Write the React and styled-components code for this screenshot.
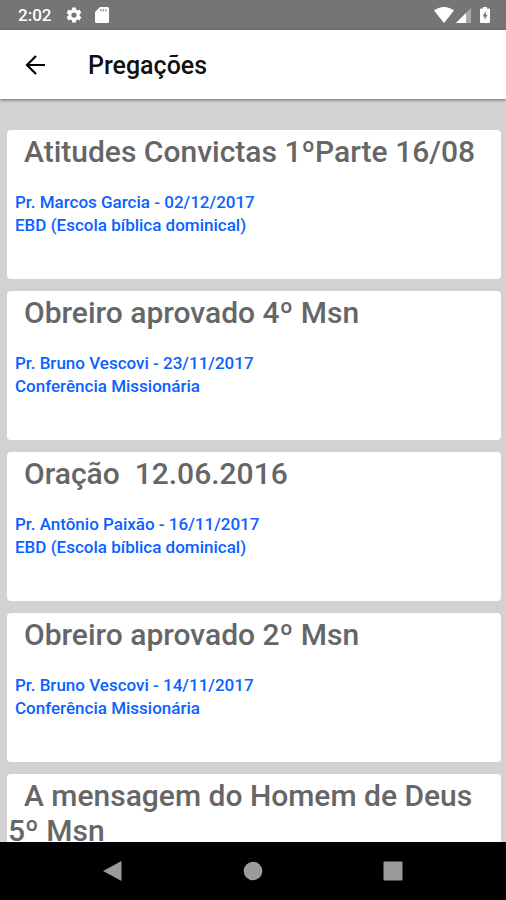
import React from "react";
import styled, { createGlobalStyle } from "styled-components";

const GlobalStyle = createGlobalStyle`
  body {
    margin:0;
    font-family:Roboto, "Liberation Sans", sans-serif;
  }
  * {
    box-sizing:border-box;
  }
`;

const Screen = styled.div`
  height:100vh;
  display:flex;
  flex-direction:column;
  background-color:#d3d1d4;
`;

const StatusBar = styled.div`
  flex:none;
  height:30px;
  padding:0 16px 0 18px;
  display:flex;
  align-items:center;
  justify-content:space-between;
  background-color:#757575;
  color:#ffffff;
`;

const StatusGroup = styled.div`
  display:flex;
  align-items:center;
  gap:${({ $gap }) => $gap}px;
`;

const Clock = styled.span`
  font-size:17px;
  font-weight:500;
  line-height:20px;
`;

const Header = styled.header`
  flex:none;
  height:69px;
  padding:0 24px;
  display:flex;
  align-items:center;
  gap:40px;
  background-color:#ffffff;
  box-shadow:0 1px 3px rgba(0, 0, 0, 0.5);
  z-index:1;
`;

const BackButton = styled.button`
  display:flex;
  padding:0;
  border:none;
  background:none;
  color:#000000;
  cursor:pointer;
`;

const HeaderTitle = styled.h1`
  margin:0;
  padding-top:2px;
  font-size:25px;
  font-weight:500;
  line-height:28px;
  color:#111111;
`;

const List = styled.main`
  flex:1;
  min-height:0;
  padding:31px 5px 0 7px;
  display:flex;
  flex-direction:column;
  gap:12px;
  overflow-y:auto;
  scrollbar-width:none;
`;

const Card = styled.article`
  flex:none;
  padding-bottom:42px;
  border-radius:4px;
  background-color:#ffffff;
`;

const CardTitle = styled.h2`
  margin:0 0 22px;
  padding:4px 1px 0;
  font-size:30px;
  font-weight:500;
  line-height:35px;
  text-indent:16px;
  white-space:pre-wrap;
  color:#666666;
`;

const CardText = styled.p`
  margin:0;
  padding:0 8px;
  font-size:17px;
  font-weight:500;
  line-height:23px;
  color:#0a62ff;
`;

const NavBar = styled.nav`
  flex:none;
  height:58px;
  display:flex;
  align-items:center;
  justify-content:center;
  gap:120px;
  background-color:#000000;
`;

const NavButton = styled.button`
  display:flex;
  padding:0;
  border:none;
  background:none;
  color:#9b9b9b;
  cursor:pointer;
`;

const sermons = [
  { title: "Atitudes Convictas 1ºParte 16/08", author: "Pr. Marcos Garcia", date: "02/12/2017", event: "EBD (Escola bíblica dominical)" },
  { title: "Obreiro aprovado 4º Msn", author: "Pr. Bruno Vescovi", date: "23/11/2017", event: "Conferência Missionária" },
  { title: "Oração  12.06.2016", author: "Pr. Antônio Paixão", date: "16/11/2017", event: "EBD (Escola bíblica dominical)" },
  { title: "Obreiro aprovado 2º Msn", author: "Pr. Bruno Vescovi", date: "14/11/2017", event: "Conferência Missionária" },
  { title: "A mensagem do Homem de Deus 5º Msn" },
];

const GearIcon = () => (
  <svg width="18" height="18" viewBox="0 0 24 24" fill="currentColor">
    <path d="M19.43 12.98c.04-.32.07-.64.07-.98s-.03-.66-.07-.98l2.11-1.65c.19-.15.24-.42.12-.64l-2-3.46c-.12-.22-.39-.3-.61-.22l-2.49 1c-.52-.4-1.08-.73-1.69-.98l-.38-2.65A.49.49 0 0 0 14 2h-4c-.25 0-.46.18-.49.42l-.38 2.65c-.61.25-1.17.59-1.69.98l-2.49-1c-.23-.09-.49 0-.61.22l-2 3.46c-.13.22-.07.49.12.64l2.11 1.65c-.04.32-.07.65-.07.98s.03.66.07.98l-2.11 1.65c-.19.15-.24.42-.12.64l2 3.46c.12.22.39.3.61.22l2.49-1c.52.4 1.08.73 1.69.98l.38 2.65c.03.24.24.42.49.42h4c.25 0 .46-.18.49-.42l.38-2.65c.61-.25 1.17-.59 1.69-.98l2.49 1c.23.09.49 0 .61-.22l2-3.46c.12-.22.07-.49-.12-.64zM12 15.5a3.5 3.5 0 1 1 0-7 3.5 3.5 0 0 1 0 7z" />
  </svg>
);

const SdCardIcon = () => (
  <svg width="14" height="16" viewBox="0 0 14 16">
    <path d="M5 0h7.500a1.500 1.500 0 0 1 1.500 1.500v13a1.500 1.500 0 0 1-1.500 1.500h-11A1.500 1.500 0 0 1 0 14.500V5z" fill="#ffffff" />
    <path d="M5 2h1.500v2.500H5zM7.500 2H9v2.500H7.500zM10 2h1.500v2.500H10z" fill="#a8a8a8" />
  </svg>
);

const WifiIcon = () => (
  <svg width="20" height="16" viewBox="0 0 20 16" fill="currentColor">
    <path d="M10 16L0 3.500C3 1.200 6.400 0 10 0s7 1.200 10 3.500z" />
  </svg>
);

const SignalIcon = () => (
  <svg width="15" height="15" viewBox="0 0 15 15">
    <path d="M15 0v15H0z" fill="#a9a9a9" />
    <path d="M10 5v10H0z" fill="#ffffff" />
  </svg>
);

const BatteryIcon = () => (
  <svg width="10" height="16" viewBox="0 0 10 16">
    <path d="M3 0h4v1.500h2a1 1 0 0 1 1 1V15a1 1 0 0 1-1 1H1a1 1 0 0 1-1-1V2.500a1 1 0 0 1 1-1h2z" fill="#ffffff" />
    <path d="M5.800 4L2.600 9.400h2V13l3-5.300H5.800z" fill="#757575" />
  </svg>
);

const ArrowIcon = () => (
  <svg width="24" height="24" viewBox="0 0 24 24" fill="none" stroke="currentColor" strokeWidth="2.200">
    <path d="M21 12H3.500M12 3L3 12l9 9" />
  </svg>
);

const App = () => {
  return(
    <>
      <GlobalStyle />
      <Screen>
        <StatusBar>
          <StatusGroup $gap={14}>
            <Clock>2:02</Clock>
            <StatusGroup $gap={12}>
              <GearIcon />
              <SdCardIcon />
            </StatusGroup>
          </StatusGroup>
          <StatusGroup $gap={2}>
            <WifiIcon />
            <StatusGroup $gap={9}>
              <SignalIcon />
              <BatteryIcon />
            </StatusGroup>
          </StatusGroup>
        </StatusBar>
        <Header>
          <BackButton type="button" aria-label="Voltar">
            <ArrowIcon />
          </BackButton>
          <HeaderTitle>Pregações</HeaderTitle>
        </Header>
        <List>
          {sermons.map((sermon) => (
            <Card key={sermon.title}>
              <CardTitle>{sermon.title}</CardTitle>
              {sermon.author && <CardText>{sermon.author} - {sermon.date}</CardText>}
              {sermon.event && <CardText>{sermon.event}</CardText>}
            </Card>
          ))}
        </List>
        <NavBar>
          <NavButton type="button" aria-label="Voltar">
            <svg width="20" height="20" viewBox="0 0 20 20" fill="currentColor">
              <path d="M18.500 0v20L0 10z" />
            </svg>
          </NavButton>
          <NavButton type="button" aria-label="Início">
            <svg width="20" height="20" viewBox="0 0 20 20" fill="currentColor">
              <circle cx="10" cy="10" r="9.300" />
            </svg>
          </NavButton>
          <NavButton type="button" aria-label="Recentes">
            <svg width="20" height="20" viewBox="0 0 20 20" fill="currentColor">
              <rect x="0.500" y="0.500" width="19" height="19" rx="1" />
            </svg>
          </NavButton>
        </NavBar>
      </Screen>
    </>
  );
}

export default App;
